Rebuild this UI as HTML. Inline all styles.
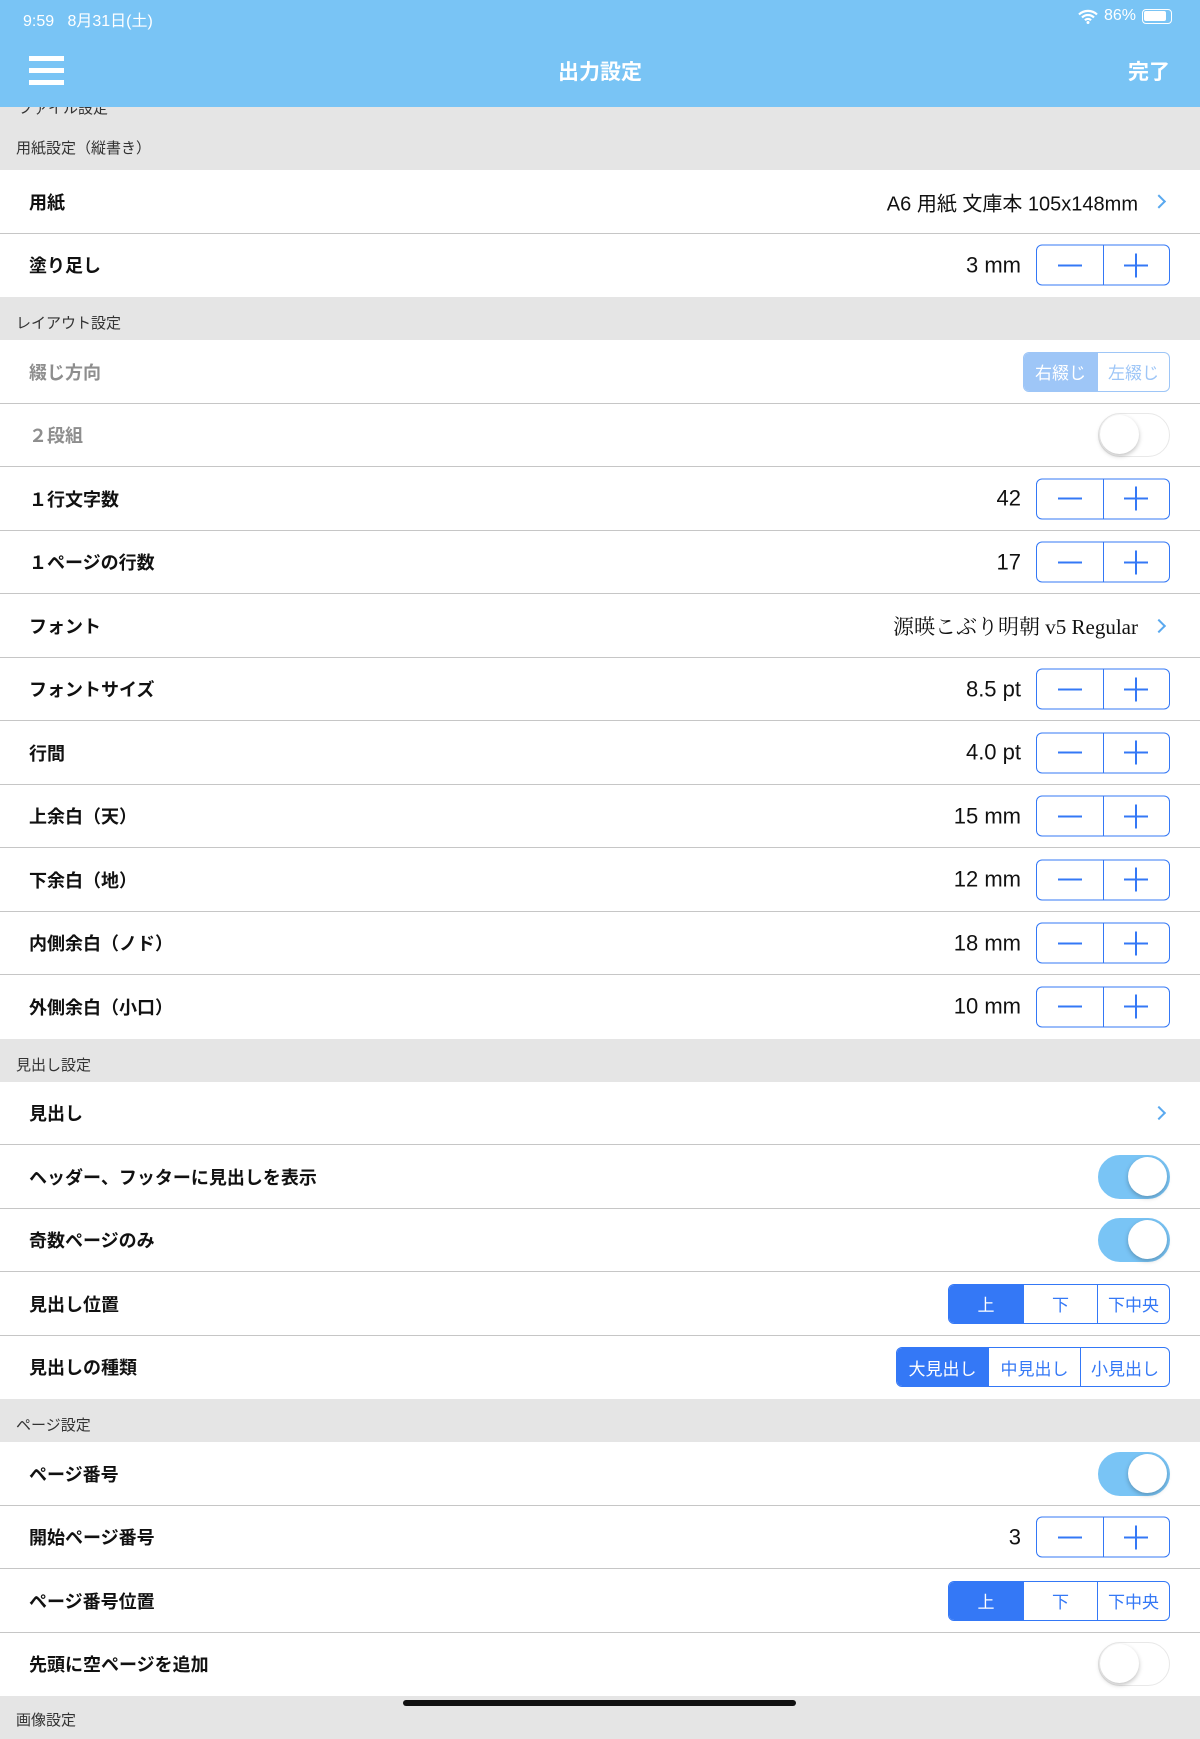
<!DOCTYPE html>
<html><head><meta charset="utf-8"><style>
*{margin:0;padding:0;box-sizing:border-box}
body{width:1200px;height:1718px;overflow:hidden;background:#e5e5e5;font-family:"Liberation Sans","Noto Sans CJK JP",sans-serif;position:relative}
.nav{position:absolute;top:0;left:0;width:1200px;height:107px;background:#79c4f5;color:#fff;z-index:2}
.sb{position:absolute;top:7px;left:23px;font-size:16px}
.sbr{position:absolute;top:7px;right:28px;font-size:16px;display:flex;align-items:center;gap:6px}
.title{position:absolute;top:56px;width:100%;text-align:center;font-size:21px;font-weight:bold}
.done{position:absolute;top:56px;right:30px;font-size:21px;font-weight:bold}
.menu{position:absolute;left:29px;top:56px;width:35px}
.menu div{height:5px;background:#fff;margin-bottom:7px}
.content{position:absolute;top:0;left:0;width:1200px}
.ft{position:absolute;top:97px;left:18px;font-size:15px;color:#333;z-index:1}
.hdr{height:43px;background:#e5e5e5;font-size:15px;color:#333;padding:15px 0 0 16px}
.row{height:63.5px;background:#fff;position:relative;display:flex;align-items:center;padding-left:29px;font-size:18px;font-weight:bold;color:#111}
.row:after{content:"";position:absolute;left:0;right:0;bottom:0;height:1px;background:#c6c6c6}
.row.last:after{display:none}
.dis{color:#8e8e8e}
.r{position:absolute;right:30px;top:50%;transform:translateY(-50%);display:flex;align-items:center}
.val{font-size:22px;font-weight:normal;color:#111;margin-right:15px}
.st{display:flex;width:134px;height:41px;border:1.5px solid #3478f6;border-radius:6px}
.st div{flex:1;position:relative}
.st div+div{border-left:1.5px solid #3478f6}
.st .m:before,.st .p:before,.st .p:after{content:"";position:absolute;background:#3478f6;left:50%;top:50%}
.st .m:before,.st .p:before{width:24px;height:2px;margin:-1px 0 0 -12px}
.st .p:after{width:2px;height:24px;margin:-12px 0 0 -1px}
.chev{width:10px;height:10px;border-right:2.5px solid #5aa9ef;border-top:2.5px solid #5aa9ef;transform:rotate(45deg);margin-right:6px}
.link{font-size:20px;font-weight:normal;color:#111;margin-right:16px}
.tg{width:72px;height:44px;border-radius:22px;position:relative;background:#fff;border:1.5px solid #e8e8e8}
.tg:after{content:"";position:absolute;top:1px;left:1px;width:39px;height:39px;border-radius:50%;background:#fff;box-shadow:0 2px 5px rgba(0,0,0,.25)}
.tg.on{background:#79c4f5;border-color:#79c4f5}
.tg.on:after{left:29px}
.seg{display:flex;height:40px;border:1.5px solid #3478f6;border-radius:6px;overflow:hidden}
.seg div{display:flex;align-items:center;justify-content:center;font-size:17px;font-weight:normal;color:#3478f6}
.seg div+div{border-left:1.5px solid #3478f6}
.seg .a{background:#3478f6;color:#fff}
.seg.d{border-color:#9ec6f7}.seg.d div{color:#9ec6f7}.seg.d .a{background:#9ec6f7;color:#fff}.seg.d div+div{border-color:#9ec6f7}
.home{position:absolute;left:403px;top:1700px;width:393px;height:6px;border-radius:3px;background:#111;z-index:3}
</style></head><body>
<div class="nav">
<div class="sb">9:59&nbsp;&nbsp;&nbsp;8月31日(土)</div>
<div class="sbr"><svg width="20" height="15" viewBox="0 0 20 15"><path d="M1 5.5a13 13 0 0 1 18 0M4 8.5a8.5 8.5 0 0 1 12 0M7 11.3a4 4 0 0 1 6 0" fill="none" stroke="#fff" stroke-width="2.2"/><circle cx="10" cy="13.5" r="1.5" fill="#fff"/></svg><span>86%</span><span style="display:inline-block;width:30px;height:15px;border:1.5px solid #fff;border-radius:4px;padding:1px"><span style="display:block;width:22px;height:10px;background:#fff;border-radius:2px"></span></span></div>
<div class="menu"><div></div><div></div><div></div></div>
<div class="title">出力設定</div>
<div class="done">完了</div>
</div>
<div class="content">
<div class="ft">ファイル設定</div>
<div style="height:107px"></div>
<div class="hdr" style="height:63px;padding-top:30px">用紙設定（縦書き）</div>
<div class="row">用紙<div class="r"><span class="link">A6 用紙 文庫本 105x148mm</span><span class="chev"></span></div></div>
<div class="row last">塗り足し<div class="r"><span class="val">3 mm</span><div class="st"><div class="m"></div><div class="p"></div></div></div></div>
<div class="hdr">レイアウト設定</div>
<div class="row dis">綴じ方向<div class="r"><div class="seg d" style="width:147px"><div class="a" style="width:73px">右綴じ</div><div style="flex:1">左綴じ</div></div></div></div>
<div class="row dis">２段組<div class="r"><div class="tg"></div></div></div>
<div class="row">１行文字数<div class="r"><span class="val">42</span><div class="st"><div class="m"></div><div class="p"></div></div></div></div>
<div class="row">１ページの行数<div class="r"><span class="val">17</span><div class="st"><div class="m"></div><div class="p"></div></div></div></div>
<div class="row">フォント<div class="r"><span class="link" style="font-family:'Liberation Serif','Noto Serif CJK SC',serif;font-size:21px">源暎こぶり明朝 v5 Regular</span><span class="chev"></span></div></div>
<div class="row">フォントサイズ<div class="r"><span class="val">8.5 pt</span><div class="st"><div class="m"></div><div class="p"></div></div></div></div>
<div class="row">行間<div class="r"><span class="val">4.0 pt</span><div class="st"><div class="m"></div><div class="p"></div></div></div></div>
<div class="row">上余白（天）<div class="r"><span class="val">15 mm</span><div class="st"><div class="m"></div><div class="p"></div></div></div></div>
<div class="row">下余白（地）<div class="r"><span class="val">12 mm</span><div class="st"><div class="m"></div><div class="p"></div></div></div></div>
<div class="row">内側余白（ノド）<div class="r"><span class="val">18 mm</span><div class="st"><div class="m"></div><div class="p"></div></div></div></div>
<div class="row last">外側余白（小口）<div class="r"><span class="val">10 mm</span><div class="st"><div class="m"></div><div class="p"></div></div></div></div>
<div class="hdr">見出し設定</div>
<div class="row">見出し<div class="r"><span class="chev"></span></div></div>
<div class="row">ヘッダー、フッターに見出しを表示<div class="r"><div class="tg on"></div></div></div>
<div class="row">奇数ページのみ<div class="r"><div class="tg on"></div></div></div>
<div class="row">見出し位置<div class="r"><div class="seg" style="width:222px"><div class="a" style="width:74px">上</div><div style="width:74px">下</div><div style="flex:1">下中央</div></div></div></div>
<div class="row last">見出しの種類<div class="r"><div class="seg" style="width:274px"><div class="a" style="width:91px">大見出し</div><div style="width:92px">中見出し</div><div style="flex:1">小見出し</div></div></div></div>
<div class="hdr">ページ設定</div>
<div class="row">ページ番号<div class="r"><div class="tg on"></div></div></div>
<div class="row">開始ページ番号<div class="r"><span class="val">3</span><div class="st"><div class="m"></div><div class="p"></div></div></div></div>
<div class="row">ページ番号位置<div class="r"><div class="seg" style="width:222px"><div class="a" style="width:74px">上</div><div style="width:74px">下</div><div style="flex:1">下中央</div></div></div></div>
<div class="row last">先頭に空ページを追加<div class="r"><div class="tg"></div></div></div>
<div class="hdr" style="padding-top:13px">画像設定</div>
</div>
<div class="home"></div>
</body></html>
